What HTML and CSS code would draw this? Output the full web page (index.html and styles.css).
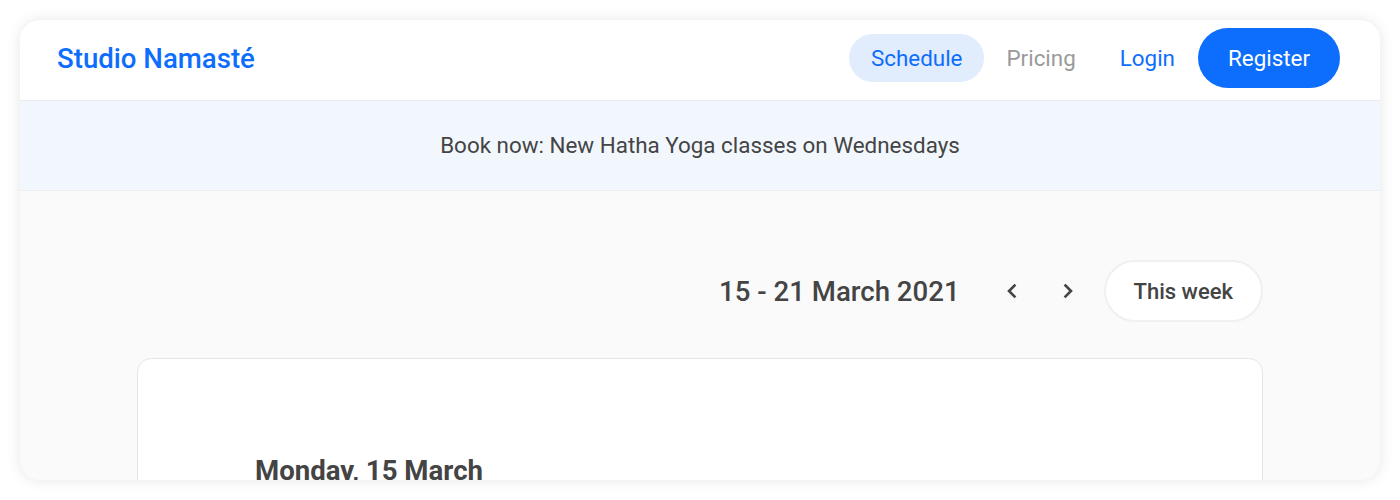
FILE: index.html
```html
<!DOCTYPE html>
<html lang="en">
<head>
<meta charset="utf-8">
<title>Studio Namasté</title>
<link rel="stylesheet" href="styles.css">
</head>
<body>
<div class="app">
  <header class="topbar">
    <a class="logo" href="#">Studio Namasté</a>
    <nav class="nav">
      <a class="nav-link active" href="#">Schedule</a>
      <a class="nav-link muted" href="#">Pricing</a>
      <a class="nav-link" href="#">Login</a>
      <a class="btn-primary" href="#">Register</a>
    </nav>
  </header>
  <div class="banner">Book now: New Hatha Yoga classes on Wednesdays</div>
  <main class="main">
    <div class="container">
      <div class="week-bar">
        <span class="week-label">15 - 21 March 2021</span>
        <button class="icon-btn" aria-label="Previous week">
          <svg width="14" height="18" viewBox="0 0 14 18"><path d="M9.5 3.5 L4 9 L9.5 14.5" fill="none" stroke="#444" stroke-width="2.6" stroke-linecap="square" stroke-linejoin="miter"/></svg>
        </button>
        <button class="icon-btn" aria-label="Next week">
          <svg width="14" height="18" viewBox="0 0 14 18"><path d="M4.5 3.5 L10 9 L4.5 14.5" fill="none" stroke="#444" stroke-width="2.6" stroke-linecap="square" stroke-linejoin="miter"/></svg>
        </button>
        <button class="btn-outline">This week</button>
      </div>
      <section class="day-card">
        <h2 class="day-title">Monday, 15 March</h2>
      </section>
    </div>
  </main>
</div>
</body>
</html>
```

FILE: styles.css
```css
* { box-sizing: border-box; }
html, body { margin: 0; padding: 0; }
body {
  background: #ffffff;
  font-family: Roboto, "Liberation Sans", sans-serif;
  padding: 20px;
  height: 500px;
  overflow: hidden;
}
.app {
  height: 460px;
  border-radius: 20px;
  overflow: hidden;
  background: #fafafa;
  box-shadow: 0 0 14px rgba(0,0,0,0.10);
}
.topbar {
  height: 81px;
  background: #fff;
  border-bottom: 1px solid #ebedf0;
  display: flex;
  align-items: center;
  justify-content: space-between;
  padding: 0 40px 0 37px;
}
.logo {
  color: #0d6efd;
  font-size: 27.6px;
  font-weight: 500;
  text-decoration: none;
  margin-top: -3px;
}
.nav {
  display: flex;
  align-items: center;
  margin-top: -4px;
}
.nav-link {
  font-size: 22.4px;
  color: #0d6efd;
  text-decoration: none;
  height: 48px;
  line-height: 48px;
  padding: 0 22px;
  border-radius: 24px;
}
.nav-link.active { background: #e1ecfd; }
.nav-link.muted { color: #9a9a9a; }
.btn-primary {
  margin-left: 1px;
  background: #0d6efd;
  color: #fff;
  font-size: 22.4px;
  font-weight: 400;
  text-decoration: none;
  height: 60px;
  line-height: 60px;
  padding: 0 30px;
  border-radius: 30px;
}
.banner {
  height: 90px;
  background: #f2f7fe;
  border-bottom: 1px solid #eceef0;
  display: flex;
  align-items: center;
  justify-content: center;
  font-size: 22.4px;
  color: #444;
  padding-bottom: 2px;
}
.main { padding-top: 69px; }
.container {
  width: 1126px;
  margin: 0 auto;
}
.week-bar {
  display: flex;
  align-items: center;
  justify-content: flex-end;
  height: 62px;
}
.week-label {
  font-size: 27.6px;
  font-weight: 500;
  color: #444;
  margin-right: 24px;
}
.icon-btn {
  border: 0;
  background: transparent;
  width: 56px;
  height: 40px;
  padding: 0;
  display: flex;
  align-items: center;
  justify-content: center;
  cursor: pointer;
}
.btn-outline {
  margin-left: 8px;
  height: 62px;
  padding: 0 28px;
  border-radius: 31px;
  background: #fff;
  border: 2px solid #f0f0f0;
  font-family: inherit;
  font-size: 22px;
  font-weight: 500;
  color: #444;
  cursor: pointer;
}
.day-card {
  margin-top: 36px;
  background: #fff;
  border: 1px solid #e6e6ea;
  border-radius: 14px;
  height: 240px;
  padding: 95px 117px 0;
}
.day-title {
  margin: 0;
  font-size: 27.6px;
  font-weight: 700;
  color: #444;
}
```
